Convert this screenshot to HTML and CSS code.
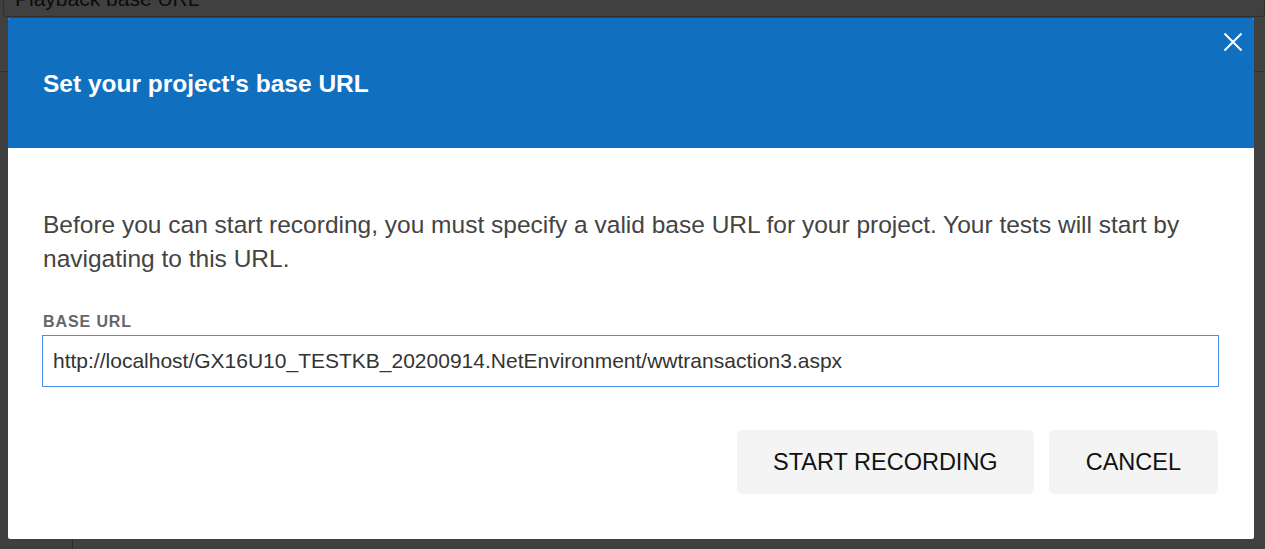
FILE: index.html
```html
<!DOCTYPE html>
<html>
<head>
<meta charset="utf-8">
<link rel="stylesheet" href="styles.css">
</head>
<body>
<div class="page">
  <div class="topbar">
    <div class="bg-input">Playback base URL</div>
  </div>
  <div class="main">
    <div class="sidebar"></div>
    <div class="content"></div>
  </div>
</div>
<div class="overlay"></div>
<div class="modal">
  <div class="modal-header">
    <h1 class="modal-title">Set your project's base URL</h1>
    <button class="close" aria-label="Close">
      <svg width="20" height="20" viewBox="0 0 20 20"><path d="M1.5 1.5 L18.5 18.5 M18.5 1.5 L1.5 18.5" stroke="#fff" stroke-width="2" fill="none"/></svg>
    </button>
  </div>
  <div class="modal-body">
    <p class="intro">Before you can start recording, you must specify a valid base URL for your project. Your tests will start by navigating to this URL.</p>
    <label class="field-label">BASE URL</label>
    <div class="url-input">http://localhost/GX16U10_TESTKB_20200914.NetEnvironment/wwtransaction3.aspx</div>
    <div class="actions">
      <button class="btn">START RECORDING</button>
      <button class="btn btn-cancel">CANCEL</button>
    </div>
  </div>
</div>
</body>
</html>
```

FILE: styles.css
```css
html, body {
  margin: 0;
  padding: 0;
}
body {
  width: 1265px;
  height: 549px;
  overflow: hidden;
  background: #ffffff;
  font-family: "Liberation Sans", Arial, sans-serif;
  position: relative;
}
.page {
  display: flex;
  flex-direction: column;
  height: 549px;
}
.topbar {
  height: 72px;
  border-bottom: 1px solid #c8c8c8;
  box-sizing: border-box;
  padding: 0 0 0 3px;
  background: #fff;
}
.bg-input {
  margin-top: -14px;
  height: 29px;
  border: 1px solid #c0c0c0;
  border-radius: 3px;
  padding: 0 11px;
  font-size: 21px;
  line-height: 24px;
  color: #333;
}
.main {
  flex: 1;
  display: flex;
}
.sidebar {
  width: 72px;
  border-right: 1px solid #aaa;
  background: #fafafa;
}
.content {
  flex: 1;
}
.overlay {
  position: absolute;
  inset: 0;
  background: rgba(0, 0, 0, 0.75);
}
.modal {
  position: absolute;
  left: 8px;
  top: 18px;
  width: 1246px;
  height: 521px;
  background: #ffffff;
  border-radius: 2px;
  overflow: hidden;
  display: flex;
  flex-direction: column;
}
.modal-header {
  height: 130px;
  flex: none;
  background: #106fbf;
  display: flex;
  align-items: center;
  padding: 2px 35px 0;
  position: relative;
  box-sizing: border-box;
}
.modal-title {
  margin: 0;
  color: #ffffff;
  font-size: 24.5px;
  font-weight: bold;
  line-height: 28px;
}
.close {
  position: absolute;
  right: 11px;
  top: 14px;
  width: 20px;
  height: 20px;
  padding: 0;
  border: 0;
  background: transparent;
  display: flex;
}
.modal-body {
  padding: 60px 35px 0 35px;
  display: flex;
  flex-direction: column;
}
.intro {
  margin: 0;
  font-size: 24.5px;
  line-height: 34px;
  color: #444444;
}
.field-label {
  margin-top: 38px;
  font-size: 16px;
  line-height: 16px;
  letter-spacing: 0.9px;
  font-weight: bold;
  color: #666666;
}
.url-input {
  margin-top: 5px;
  margin-left: -1px;
  height: 50px;
  border: 1px solid #4a8ce6;
  padding: 0 10px;
  font-size: 21px;
  line-height: 50px;
  color: #333333;
}
.actions {
  margin-top: 43px;
  display: flex;
  justify-content: flex-end;
  gap: 15px;
  margin-right: 1px;
}
.btn {
  height: 64px;
  padding: 0 36px;
  border: 0;
  border-radius: 5px;
  background: #f4f4f4;
  font-family: "Liberation Sans", Arial, sans-serif;
  font-size: 23.5px;
  color: #111111;
}
.btn-cancel {
  padding: 0 37px;
}
```
